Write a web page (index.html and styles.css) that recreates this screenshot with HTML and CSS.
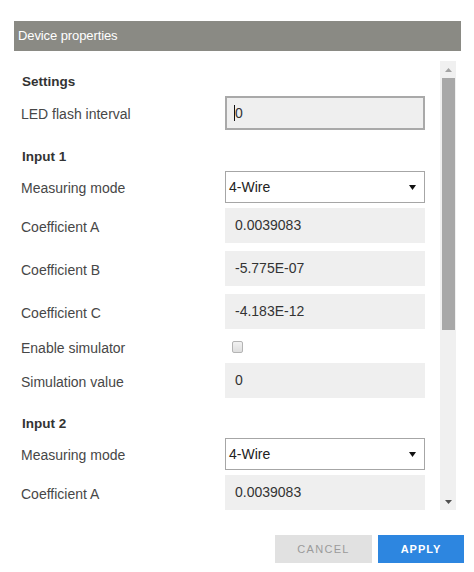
FILE: index.html
```html
<!DOCTYPE html>
<html>
<head>
<meta charset="utf-8">
<link rel="stylesheet" href="styles.css">
</head>
<body>
<div class="dialog">
  <div class="header">Device properties</div>
  <div class="body">
    <div class="content">
      <div class="heading mt10">Settings</div>
      <div class="row mt5">
        <div class="label">LED flash interval</div>
        <div class="field field-focus"><span class="caret"></span>0</div>
      </div>

      <div class="heading mt16">Input 1</div>
      <div class="row mt5">
        <div class="label">Measuring mode</div>
        <div class="select"><span>4-Wire</span><svg class="arrow" width="7" height="5" viewBox="0 0 7 5"><path d="M0 0H7L3.5 5Z" fill="#111"/></svg></div>
      </div>
      <div class="row mt5">
        <div class="label">Coefficient A</div>
        <div class="field">0.0039083</div>
      </div>
      <div class="row mt8">
        <div class="label">Coefficient B</div>
        <div class="field">-5.775E-07</div>
      </div>
      <div class="row mt8">
        <div class="label">Coefficient C</div>
        <div class="field">-4.183E-12</div>
      </div>
      <div class="row row-check mt8">
        <div class="label">Enable simulator</div>
        <div><span class="checkbox"></span></div>
      </div>
      <div class="row mt6">
        <div class="label">Simulation value</div>
        <div class="field">0</div>
      </div>

      <div class="heading mt15">Input 2</div>
      <div class="row mt5">
        <div class="label">Measuring mode</div>
        <div class="select"><span>4-Wire</span><svg class="arrow" width="7" height="5" viewBox="0 0 7 5"><path d="M0 0H7L3.5 5Z" fill="#111"/></svg></div>
      </div>
      <div class="row mt5">
        <div class="label">Coefficient A</div>
        <div class="field">0.0039083</div>
      </div>
    </div>
    <div class="scrollbar">
      <div class="sb-btn"><svg width="7" height="4" viewBox="0 0 7 4"><path d="M0 4H7L3.5 0Z" fill="#a3a3a3"/></svg></div>
      <div class="sb-track"><div class="sb-thumb"></div></div>
      <div class="sb-btn"><svg width="7" height="4" viewBox="0 0 7 4"><path d="M0 0H7L3.5 4Z" fill="#505050"/></svg></div>
    </div>
  </div>
  <div class="actions">
    <button class="btn btn-cancel">CANCEL</button>
    <button class="btn btn-apply">APPLY</button>
  </div>
</div>
</body>
</html>
```

FILE: styles.css
```css
html, body {
  margin: 0;
  padding: 0;
  background: #fff;
}
body {
  font-family: "Liberation Sans", Arial, sans-serif;
  color: #444;
  font-size: 14px;
}
.dialog {
  padding-top: 21px;
}
.header {
  margin: 0 13px 0 14px;
  height: 30px;
  line-height: 30px;
  padding-left: 4px;
  background: #8a8a84;
  color: #fff;
  font-size: 13px;
  letter-spacing: -0.1px;
}
.body {
  display: flex;
  margin: 10px 0 0 14px;
  width: 442px;
  height: 449px;
}
.content {
  flex: 1;
  overflow: hidden;
  padding-left: 7px;
}
.heading {
  font-weight: bold;
  font-size: 13.5px;
  height: 20px;
  line-height: 22px;
  color: #333;
  padding-left: 1px;
}
.mt5 { margin-top: 5px; }
.mt6 { margin-top: 6px; }
.mt8 { margin-top: 8px; }
.mt10 { margin-top: 10px; }
.mt15 { margin-top: 15px; }
.mt16 { margin-top: 16px; }
.row {
  display: grid;
  grid-template-columns: 204px 200px;
  align-items: center;
}
.row-check {
  height: 20px;
}
.label {
  color: #474747;
  padding-top: 2px;
}
.field {
  box-sizing: border-box;
  height: 35px;
  line-height: 35px;
  padding-left: 10px;
  background: #efefef;
  color: #333;
}
.field-focus {
  height: 34px;
  line-height: 30px;
  border: 2px solid #a9a9a9;
  padding-left: 7px;
  display: flex;
  align-items: center;
}
.caret {
  display: inline-block;
  width: 1px;
  height: 16px;
  background: #111;
}
.select {
  box-sizing: border-box;
  height: 32px;
  border: 1px solid #a6a6a6;
  background: #fff;
  display: flex;
  align-items: center;
  justify-content: space-between;
  padding: 0 8px 0 3px;
  color: #222;
}
.arrow {
  display: block;
}
.checkbox {
  display: block;
  box-sizing: border-box;
  width: 11px;
  height: 12px;
  margin-left: 7px;
  border: 1px solid #b4b4b4;
  border-radius: 2px;
  background: linear-gradient(#f2f2f2, #dedede);
}
.scrollbar {
  width: 16px;
  display: flex;
  flex-direction: column;
  background: #f0f0f0;
}
.sb-btn {
  height: 17px;
  display: flex;
  align-items: center;
  justify-content: center;
}
.sb-track {
  flex: 1;
  padding: 0 1px 0 2px;
}
.sb-thumb {
  height: 252px;
  background: #a8a8a8;
}
.actions {
  display: flex;
  justify-content: flex-end;
  gap: 6px;
  margin-top: 25px;
  padding-right: 10px;
}
.btn {
  height: 28px;
  border: none;
  font-family: "Liberation Sans", Arial, sans-serif;
  font-size: 11px;
  letter-spacing: 1.3px;
  padding: 0;
}
.btn-cancel {
  width: 97px;
  background: #e1e1e1;
  color: #9b9b9b;
}
.btn-apply {
  width: 86px;
  background: #2d86e0;
  color: #fff;
  font-weight: bold;
  letter-spacing: 1px;
}
```
